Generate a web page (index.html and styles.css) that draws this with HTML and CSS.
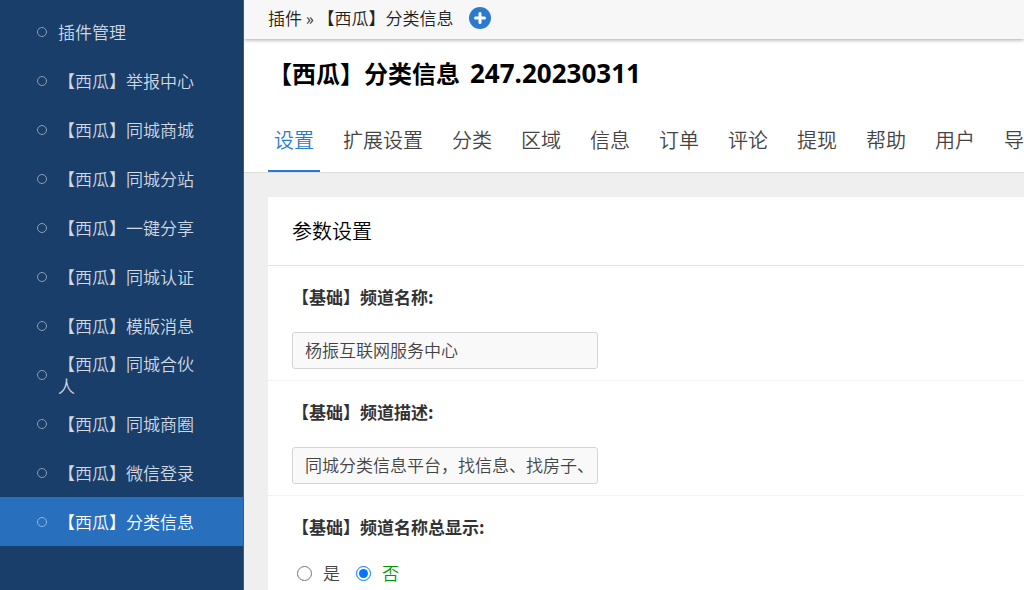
FILE: index.html
```
<!DOCTYPE html>
<html lang="zh-CN">
<head>
<meta charset="utf-8">
<title>分类信息</title>
<link rel="stylesheet" href="styles.css">
</head>
<body>
<div class="layout">
  <nav class="sidebar">
    <a class="side-item" href="#"><span class="dot"></span><span class="side-label">插件管理</span></a>
    <a class="side-item" href="#"><span class="dot"></span><span class="side-label">【西瓜】举报中心</span></a>
    <a class="side-item" href="#"><span class="dot"></span><span class="side-label">【西瓜】同城商城</span></a>
    <a class="side-item" href="#"><span class="dot"></span><span class="side-label">【西瓜】同城分站</span></a>
    <a class="side-item" href="#"><span class="dot"></span><span class="side-label">【西瓜】一键分享</span></a>
    <a class="side-item" href="#"><span class="dot"></span><span class="side-label">【西瓜】同城认证</span></a>
    <a class="side-item" href="#"><span class="dot"></span><span class="side-label">【西瓜】模版消息</span></a>
    <a class="side-item" href="#"><span class="dot"></span><span class="side-label">【西瓜】同城合伙人</span></a>
    <a class="side-item" href="#"><span class="dot"></span><span class="side-label">【西瓜】同城商圈</span></a>
    <a class="side-item" href="#"><span class="dot"></span><span class="side-label">【西瓜】微信登录</span></a>
    <a class="side-item active" href="#" aria-current="page"><span class="dot"></span><span class="side-label">【西瓜】分类信息</span></a>
  </nav>
  <div class="main">
    <header class="crumbs">
      <span>插件 » 【西瓜】分类信息</span>
      <button class="add" type="button" aria-label="添加">
        <svg width="22" height="22" viewBox="0 0 22 22"><path d="M11 6.5v9M6.5 11h9" stroke="#fff" stroke-width="3" stroke-linecap="round" fill="none"/></svg>
      </button>
    </header>
    <div class="heading">
      <h1 class="title"><span>【西瓜】分类信息</span><span class="version">247.20230311</span></h1>
      <nav class="tabs">
        <a class="tab active" href="#">设置</a>
        <a class="tab" href="#">扩展设置</a>
        <a class="tab" href="#">分类</a>
        <a class="tab" href="#">区域</a>
        <a class="tab" href="#">信息</a>
        <a class="tab" href="#">订单</a>
        <a class="tab" href="#">评论</a>
        <a class="tab" href="#">提现</a>
        <a class="tab" href="#">帮助</a>
        <a class="tab" href="#">用户</a>
        <a class="tab" href="#">导</a>
      </nav>
    </div>
    <form class="panel">
      <h2 class="panel-title">参数设置</h2>
      <div class="row">
        <label class="row-label" for="name">【基础】频道名称:</label>
        <input class="text" id="name" type="text" value="杨振互联网服务中心">
      </div>
      <div class="row">
        <label class="row-label" for="desc">【基础】频道描述:</label>
        <input class="text" id="desc" type="text" value="同城分类信息平台，找信息、找房子、">
      </div>
      <fieldset class="row">
        <legend class="row-label">【基础】频道名称总显示:</legend>
        <div class="choices">
          <label class="choice"><input class="radio" type="radio" name="show">是</label>
          <label class="choice chosen"><input class="radio" type="radio" name="show" checked>否</label>
        </div>
      </fieldset>
    </form>
  </div>
</div>
</body>
</html>
```
FILE: styles.css
```
* { box-sizing: border-box; }

body {
  margin: 0;
  height: 100vh;
  overflow: hidden;
  background: #efefef;
  color: #222;
  font-family: "Noto Sans CJK SC", sans-serif;
  font-size: 17px;
  font-weight: 350;
  line-height: 22px;
}

a { color: inherit; text-decoration: none; }

.layout { display: flex; height: 100%; }

.sidebar {
  flex: 0 0 244px;
  padding-top: 7px;
  background: #193e69;
  border-right: 1px solid #3b5b80;
  color: #d1d8e1;
}

.side-item {
  display: flex;
  align-items: center;
  gap: 11px;
  height: 49px;
  padding: 0 46px 0 37px;
}

.side-item.active { background: #286fbe; color: #fff; }

.dot {
  flex: none;
  width: 10px;
  height: 10px;
  border: 1px solid #8c9fb4;
  border-radius: 50%;
}

.active .dot { border-color: #94b7df; }

.main { flex: 1; min-width: 0; overflow: hidden; }

.crumbs {
  position: relative;
  display: flex;
  align-items: center;
  gap: 15px;
  height: 39px;
  padding: 0 24px 3px;
  background: #f7f7f7;
  box-shadow: 0 1px 4px rgba(0, 0, 0, 0.35);
  white-space: nowrap;
}

.add {
  display: flex;
  padding: 0;
  border: 0;
  border-radius: 50%;
  background: #2b7acd;
}

.heading {
  padding: 18px 0 0 24px;
  background: #fff;
  border-bottom: 1px solid #ddd;
}

.title {
  display: flex;
  align-items: baseline;
  gap: 10px;
  margin: 0;
  color: #000;
  font-size: 24px;
  font-weight: 700;
  line-height: 32px;
  white-space: nowrap;
}

.version { font-family: "Noto Sans", sans-serif; font-size: 26px; line-height: 24px; }

.tabs { display: flex; gap: 17px; margin-top: 18px; white-space: nowrap; }

.tab {
  flex: none;
  height: 65px;
  padding: 0 6px;
  border-bottom: 2px solid transparent;
  color: #444;
  font-size: 20px;
  line-height: 66px;
}

.tab.active { border-color: #2b7acd; color: #2b7acd; }

.panel { margin: 24px 0 0 24px; background: #fff; }

.panel-title {
  margin: 0;
  padding: 0 24px;
  border-bottom: 1px solid #e3e3e3;
  color: #000;
  font-size: 20px;
  font-weight: 350;
  line-height: 68px;
}

.row {
  margin: 0;
  padding: 20px 24px 11px;
  border: 0;
  border-bottom: 1px dotted #deeffb;
  min-width: 0;
}

.row-label {
  display: block;
  float: left;
  width: 100%;
  margin-bottom: 24px;
  padding: 0;
  color: #333;
  font-weight: 700;
}

.text {
  display: block;
  clear: both;
  width: 306px;
  max-width: 100%;
  height: 37px;
  padding: 0 12px 2px;
  border: 1px solid #d5d5d5;
  border-radius: 3px;
  background: #f9f9f9;
  color: #444;
  font: inherit;
}

.choices { display: flex; clear: both; gap: 16px; padding-left: 5px; color: #444; }
.choice { display: flex; align-items: center; gap: 11px; }
.chosen { color: #090; }
.radio { width: 15px; height: 15px; margin: 0; accent-color: #0075ff; }
```
